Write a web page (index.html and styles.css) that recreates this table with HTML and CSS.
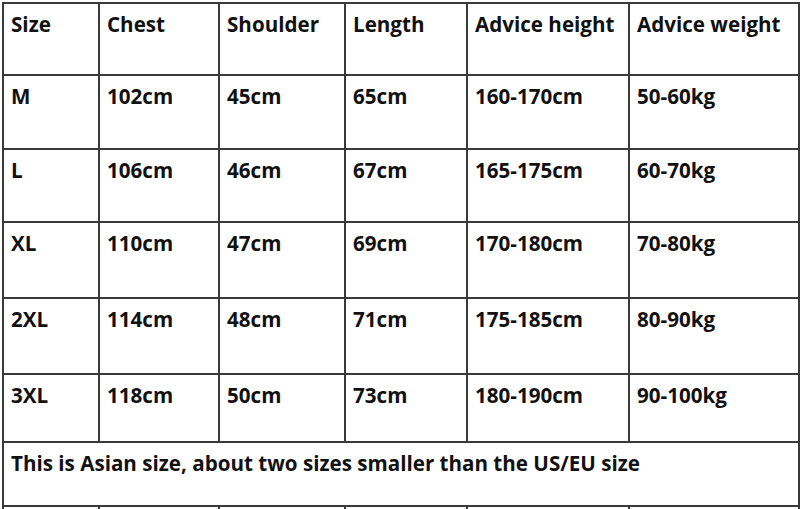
FILE: index.html
```html
<!DOCTYPE html>
<html>
<head>
<meta charset="utf-8">
<link rel="stylesheet" href="styles.css">
</head>
<body>
<table class="size-table">
  <colgroup>
    <col class="c1"><col class="c2"><col class="c3"><col class="c4"><col class="c5"><col class="c6">
  </colgroup>
  <tr class="r-head"><td>Size</td><td>Chest</td><td>Shoulder</td><td>Length</td><td>Advice height</td><td>Advice weight</td></tr>
  <tr class="r-m"><td>M</td><td>102cm</td><td>45cm</td><td>65cm</td><td>160-170cm</td><td>50-60kg</td></tr>
  <tr class="r-l"><td>L</td><td>106cm</td><td>46cm</td><td>67cm</td><td>165-175cm</td><td>60-70kg</td></tr>
  <tr class="r-xl"><td>XL</td><td>110cm</td><td>47cm</td><td>69cm</td><td>170-180cm</td><td>70-80kg</td></tr>
  <tr class="r-2xl"><td>2XL</td><td>114cm</td><td>48cm</td><td>71cm</td><td>175-185cm</td><td>80-90kg</td></tr>
  <tr class="r-3xl"><td>3XL</td><td>118cm</td><td>50cm</td><td>73cm</td><td>180-190cm</td><td>90-100kg</td></tr>
  <tr class="r-note"><td colspan="6">This is Asian size, about two sizes smaller than the US/EU size</td></tr>
  <tr class="r-tail"><td></td><td></td><td></td><td></td><td></td><td></td></tr>
</table>
</body>
</html>
```
FILE: styles.css
```css
html, body {
  margin: 0;
  padding: 0;
  background: #ffffff;
}
body {
  width: 800px;
  height: 509px;
  overflow: hidden;
}
.size-table {
  margin: 2px 0 0 2px;
  border-collapse: collapse;
  table-layout: fixed;
  width: 796px;
  font-family: "Open Sans", "Lato", sans-serif;
  font-weight: 700;
  font-size: 20.6px;
  color: #111111;
}
.c1 { width: 96px; }
.c2 { width: 120px; }
.c3 { width: 126px; }
.c4 { width: 122px; }
.c5 { width: 162px; }
.c6 { width: 170px; }
.size-table td {
  border: 2px solid #3a3a3a;
  vertical-align: top;
  padding: 7px 0 0 7px;
  line-height: 26px;
  white-space: nowrap;
  overflow: hidden;
  box-sizing: border-box;
}
.r-head td { height: 72px; }
.r-m td { height: 74px; }
.r-l td { height: 73px; }
.r-xl td { height: 76px; }
.r-2xl td { height: 76px; }
.r-3xl td { height: 68px; }
.r-note td { height: 64px; }
.r-tail td { height: 20px; }
```
